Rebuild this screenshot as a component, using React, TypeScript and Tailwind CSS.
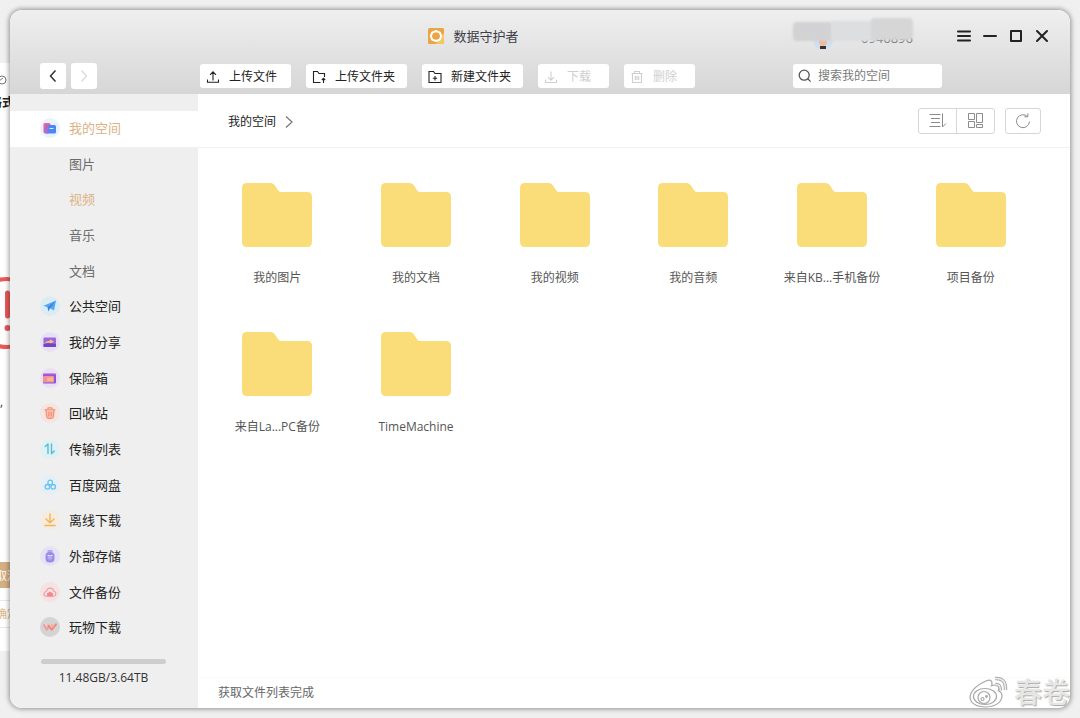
import type { ReactNode } from "react";

interface NavItem {
  label: string;
  icon?: ReactNode;
  halo?: string;
  active?: boolean;
  tone?: string;
}

interface ToolItem {
  label: string;
  icon: ReactNode;
  width: string;
  disabled?: boolean;
}

const navItems: NavItem[] = [
  {
    label: "我的空间",
    active: true,
    tone: "text-[#dcb384]",
    halo: "bg-[#e9f2fd]",
    icon: (
      <>
        <rect x="3.500" y="5" width="7" height="10" rx="1.500" fill="#f0648c" />
        <path d="M6 15V8q0-1 1-1h7.500q1.500 0 1.500 1.500V14q0 1.500-1.500 1.500H7q-1 0-1-.5Z" fill="#4c86f5" />
        <path d="M4.500 15.500V10q2-3 4-3v8.500Z" fill="#a070d8" />
        <path d="M9.500 10.500h4" stroke="#cfe2ff" strokeWidth="1.200" />
      </>
    ),
  },
  { label: "图片", tone: "text-[#6b6b6b]" },
  { label: "视频", tone: "text-[#dcb384]" },
  { label: "音乐", tone: "text-[#6b6b6b]" },
  { label: "文档", tone: "text-[#6b6b6b]" },
  {
    label: "公共空间",
    halo: "bg-[#dcecf4]",
    icon: (
      <>
        <path d="M3.500 9.800 16 4.500l-2 10-4-2.300Z" fill="#57a6f2" />
        <path d="M7.500 11.500 16 4.500l-6 7.700-1.500 3.300Z" fill="#3b7fdc" />
      </>
    ),
  },
  {
    label: "我的分享",
    halo: "bg-[#e9e0f5]",
    icon: (
      <>
        <rect x="3.500" y="5.500" width="12.500" height="9.500" rx="1" fill="#9a68dc" />
        <path d="M3.500 12q3-3.500 6.500-3.200V7.200l4 2.500-4 2.300v-1.200q-3.500-.4-6.500 1.200Z" fill="#f5c27a" />
        <path d="M3.500 12.300q6-2 12.500 0V14q0 1-1 1H4.500q-1 0-1-1Z" fill="#7044cc" />
      </>
    ),
  },
  {
    label: "保险箱",
    halo: "bg-[#eadff5]",
    icon: (
      <>
        <rect x="3" y="5.500" width="13" height="10" rx="1.200" fill="#8a56dc" />
        <rect x="3" y="8" width="11" height="6.500" rx=".8" fill="#f58f9a" />
        <rect x="7" y="9.500" width="6" height="3.500" fill="#f9b98c" />
        <path d="M3.500 6.800h12" stroke="#c05bc9" />
      </>
    ),
  },
  {
    label: "回收站",
    halo: "bg-[#f5e4e0]",
    icon: (
      <g stroke="#f58f76" fill="none" strokeWidth="1.200" strokeLinecap="round" strokeLinejoin="round">
        <path d="M5 6.800h10M8 6.500V4.800h4v1.700" />
        <path d="M6 7l.6 6.500q.2 1.800 1.900 1.800h3q1.700 0 1.900-1.800L14 7" fill="#f9c0b0" />
        <path d="M8.800 9v3.800M11.200 9v3.800" />
      </g>
    ),
  },
  {
    label: "传输列表",
    halo: "bg-[#e0f0f3]",
    icon: (
      <g stroke="#58bcd8" fill="none" strokeWidth="1.400" strokeLinecap="round" strokeLinejoin="round">
        <path d="M5.200 7.500 8 5v9.500M11.500 5v9.800L14.200 12" />
      </g>
    ),
  },
  {
    label: "百度网盘",
    halo: "bg-[#e4f0f6]",
    icon: (
      <g stroke="#67c4ee" fill="none" strokeWidth="1.300">
        <circle cx="10.200" cy="7.500" r="2.300" />
        <circle cx="7.400" cy="11.800" r="2.300" />
        <circle cx="13.200" cy="11.800" r="2.300" />
      </g>
    ),
  },
  {
    label: "离线下载",
    halo: "bg-[#f5ece0]",
    icon: (
      <g stroke="#f5b455" fill="none" strokeWidth="1.500" strokeLinecap="round" strokeLinejoin="round">
        <path d="M10 4v8.500M6 9l4 3.800L14 9M5 15.500h10" />
      </g>
    ),
  },
  {
    label: "外部存储",
    halo: "bg-[#e6e2f6]",
    icon: (
      <>
        <path d="M7.500 4h5v2.500h-5z" fill="#b5a7ef" />
        <rect x="5.500" y="6" width="9" height="10.500" rx="4" fill="#9c8be8" />
        <circle cx="10" cy="11.500" r="2.300" fill="#b8abf4" />
        <path d="M7.500 9.500h2M10.500 9.500h2" stroke="#efebff" />
      </>
    ),
  },
  {
    label: "文件备份",
    halo: "bg-[#f6e2e2]",
    icon: (
      <>
        <path
          d="M6 14.200q-2.300-.5-2-2.700.3-1.800 2.300-2 .8-3.500 4-3.400 3 .1 3.500 3.200 2.200.4 2.100 2.600-.2 1.800-1.900 2.300Z"
          fill="none"
          stroke="#f0a0a2"
          strokeWidth="1.100"
        />
        <path d="M7 14.500v-3l3-2 3 2v3Z" fill="#ef8b90" />
      </>
    ),
  },
  {
    label: "玩物下载",
    halo: "bg-[#d4d4d4]",
    icon: (
      <g fill="none" strokeLinecap="round" strokeLinejoin="round" strokeWidth="2">
        <path d="m4 8 2.800 4.800L9 9" stroke="#f79a9a" />
        <path d="m8.500 8.500 3 4.300L16 7.300" stroke="#f38482" />
        <path d="m11.800 8 1 1.500" stroke="#f9b07c" />
      </g>
    ),
  },
];

const toolItems: ToolItem[] = [
  {
    label: "上传文件",
    width: "w-[91px]",
    icon: <path d="M7 10.500V2M4 4.800 7 1.800l3 3M1.500 9.500v2.800h11V9.500" />,
  },
  {
    label: "上传文件夹",
    width: "w-[101px]",
    icon: <path d="M8.500 12.500h-7v-11h4l1.500 2h5.500V7M11.500 13V8.300M9.800 10l1.700-1.700 1.700 1.700" />,
  },
  {
    label: "新建文件夹",
    width: "w-[101px]",
    icon: <path d="M1 12.500v-11h4.500l1.500 2h6v9ZM7 6v4.500M4.800 8.200h4.400" />,
  },
  {
    label: "下载",
    width: "w-[71px]",
    disabled: true,
    icon: <path d="M7 1.500V10M4 7.200l3 3 3-3M1.500 9.800v2.700h11V9.800" />,
  },
  {
    label: "删除",
    width: "w-[71px]",
    disabled: true,
    icon: <path d="M1.500 3.500h11M4.500 3.500v-2h5v2M2.500 3.500v9h9v-9M5.300 6v4M7 6v4M8.700 6v4" />,
  },
];

const windowControls = [
  { name: "菜单", d: "M1 2.500h12M1 7h12M1 11.500h12" },
  { name: "最小化", d: "M1 7h12" },
  { name: "最大化", d: "M2 2h10v10H2z" },
  { name: "关闭", d: "m2 2 10 10M12 2 2 12" },
];

const folders = [
  "我的图片",
  "我的文档",
  "我的视频",
  "我的音频",
  "来自KB...手机备份",
  "项目备份",
  "来自La...PC备份",
  "TimeMachine",
];

function Backdrop() {
  return (
    <div className="absolute left-0 top-[63px] flex h-[588px] w-[200px] flex-col overflow-hidden bg-white" aria-hidden="true">
      <svg className="mt-[12px] h-[10px] w-[8px]" viewBox="0 0 8 10" fill="none" stroke="#777">
        <circle cx="2" cy="5" r="4" />
        <path d="M-1 6l4-3" />
      </svg>
      <p className="-ml-[10px] mt-[9px] text-[12px] font-bold leading-[18px] text-[#222]">格式</p>
      <svg className="mt-[163px] h-[76px] w-[44px] shrink-0" viewBox="0 0 44 76" fill="none" stroke="#ea5a5a" strokeWidth="4">
        <circle cx="7" cy="38" r="34" />
        <path d="M7.500 18v23" strokeLinecap="round" strokeWidth="5" />
        <circle cx="7.500" cy="53" r="3" fill="#ea5a5a" stroke="none" />
      </svg>
      <p className="mt-[42px] text-[12px] leading-[18px] text-[#333]">,</p>
      <div className="mt-[151px] h-[26px] shrink-0 bg-[#d3af84] text-[11px] leading-[28px] text-white">
        <span className="-ml-[4px]">取消</span>
      </div>
      <div className="mt-[12px] h-[28px] shrink-0 border-y border-[#e8e8e8] text-[11px] leading-[26px] text-[#dcb384]">
        <span className="-ml-[4px]">确定</span>
      </div>
    </div>
  );
}

function Account() {
  return (
    <div className="relative h-[40px] w-[120px]">
      <svg className="absolute left-[18px] top-[14px] h-[22px] w-[24px]" viewBox="0 0 24 22">
        <circle cx="12" cy="10" r="10" fill="#cfdff0" />
        <circle cx="12" cy="12" r="4" fill="#f3b8a0" />
        <path d="M9 16h6v3H9z" fill="#333" />
      </svg>
      <span className="absolute right-0 top-[13px] text-[13px] leading-[18px] text-[#7c7c7c]">0946896</span>
      <span className="absolute left-0 top-[6px] h-[19px] w-[40px] rounded-sm bg-[#d2d2d4] blur-[1px]" />
      <span className="absolute left-[38px] top-[5px] h-[20px] w-[46px] bg-[#dcdee0] blur-[1px]" />
      <span className="absolute right-0 top-[2px] h-[22px] w-[42px] rounded-sm bg-[#d6d6d6] blur-[1px]" />
    </div>
  );
}

function Header() {
  return (
    <header className="grid h-[84px] shrink-0 grid-cols-[188px_1fr_277px] grid-rows-[52px_28px] items-center bg-linear-to-b from-[#efefef] to-[#d6d6d6]">
      <div className="col-start-2 flex items-center justify-center gap-[9px] pr-[44px]">
        <svg className="h-[16px] w-[16px]" viewBox="0 0 16 16">
          <rect width="16" height="16" rx="1.500" fill="#eba544" />
          <path d="M8 16h6.500q1.500 0 1.500-1.500V5Z" fill="#f4c765" />
          <path d="m8 3 3.800 1.600L13.200 8l-1.400 3.600L8 13l-3.800-1.400L2.800 8l1.400-3.400Z" fill="none" stroke="#fff" strokeWidth="2" strokeLinejoin="round" />
        </svg>
        <h1 className="text-[13px] leading-[18px] text-[#3d3d48]">数据守护者</h1>
      </div>
      <div className="flex items-center justify-between pr-[15px]">
        <Account />
        <div className="flex text-[#222]">
          {windowControls.map((c) => (
            <button key={c.name} aria-label={c.name} className="flex h-[26px] w-[26px] items-center justify-center">
              <svg className="h-[14px] w-[14px]" viewBox="0 0 14 14" fill="none" stroke="currentColor" strokeWidth="2" strokeLinecap="round" strokeLinejoin="round">
                <path d={c.d} />
              </svg>
            </button>
          ))}
        </div>
      </div>

      <div className="flex gap-[5px] pl-[30px]">
        <button aria-label="后退" className="flex h-[26px] w-[26px] items-center justify-center rounded-[3px] bg-white text-[#333]">
          <svg className="h-[12px] w-[12px]" viewBox="0 0 12 12" fill="none" stroke="currentColor" strokeWidth="1.500">
            <path d="M8.500.5 3.500 6l5 5.500" />
          </svg>
        </button>
        <button aria-label="前进" disabled className="flex h-[26px] w-[26px] items-center justify-center rounded-[3px] bg-white text-[#d8d8d8]">
          <svg className="h-[12px] w-[12px]" viewBox="0 0 12 12" fill="none" stroke="currentColor" strokeWidth="1.200">
            <path d="m3.500.5 5 5.500-5 5.500" />
          </svg>
        </button>
      </div>
      <div className="flex gap-[15px] pl-[2px]">
        {toolItems.map((t) => (
          <button
            key={t.label}
            disabled={t.disabled}
            className={`flex h-[24px] items-center gap-[9px] rounded-[3px] bg-white pl-[6px] pt-[2px] text-[12px] leading-[18px] whitespace-nowrap ${t.width} ${
              t.disabled ? "text-[#cfcfcf]" : "text-[#222]"
            }`}
          >
            <svg className="h-[14px] w-[14px] shrink-0" viewBox="0 0 14 14" fill="none" stroke="currentColor" strokeWidth="1.100">
              {t.icon}
            </svg>
            {t.label}
          </button>
        ))}
      </div>
      <label className="flex h-[24px] w-[149px] items-center gap-[6px] rounded-[3px] bg-white pl-[5px]">
        <svg className="h-[14px] w-[14px] shrink-0" viewBox="0 0 14 14" fill="none" stroke="#555" strokeWidth="1.300">
          <circle cx="6.200" cy="6.200" r="5" />
          <path d="m9.800 9.800 2.800 2.800" />
        </svg>
        <input
          type="search"
          aria-label="搜索"
          placeholder="搜索我的空间"
          className="w-full min-w-0 bg-transparent text-[12px] leading-[18px] outline-none placeholder:text-[#7a7a7a]"
        />
      </label>
    </header>
  );
}

function Sidebar() {
  return (
    <aside className="flex w-[188px] shrink-0 flex-col bg-[#efefef] pt-[17px]">
      <nav className="flex flex-1 flex-col">
        {navItems.map((item) => (
          <a
            key={item.label}
            href="#"
            className={`flex flex-1 items-center gap-[9px] pb-[2px] pl-[30px] text-[13px] leading-[18px] ${item.tone ?? "text-[#222]"} ${
              item.active ? "bg-white" : ""
            }`}
          >
            <span className={`h-[20px] w-[20px] rounded-full ${item.halo ?? ""}`}>
              {item.icon && (
                <svg className="h-[20px] w-[20px]" viewBox="0 0 20 20">
                  {item.icon}
                </svg>
              )}
            </span>
            {item.label}
          </a>
        ))}
      </nav>
      <div className="h-[62px] pl-[31px] pt-[13px]">
        <div className="h-[5px] w-[125px] rounded-full bg-[#cdcdcd]" />
        <p className="mt-[5px] w-[125px] text-center text-[12px] leading-[18px] text-[#333]">11.48GB/3.64TB</p>
      </div>
    </aside>
  );
}

function ViewBar() {
  return (
    <div className="flex h-[54px] items-center justify-between border-b border-[#f2f2f2] pl-[30px] pr-[29px]">
      <div className="flex items-center gap-[9px] pt-[2px] text-[12px] leading-[18px] text-[#222]">
        我的空间
        <svg className="h-[12px] w-[8px]" viewBox="0 0 8 12" fill="none" stroke="#777" strokeWidth="1.200">
          <path d="m1 .5 6 5.500-6 5.500" />
        </svg>
      </div>
      <div className="flex gap-[10px] text-[#8c8c8c]">
        <div className="flex h-[26px] w-[77px] divide-x divide-[#d6d6d6] rounded-[3px] border border-[#d6d6d6]">
          <button aria-label="列表" className="flex flex-1 items-center justify-center">
            <svg className="h-[16px] w-[18px]" viewBox="0 0 18 16" fill="none" stroke="currentColor">
              <path d="M.5 1.500h11M2 5.500h9M2 9.500h9M.5 13.500h11M13.500.5v13.500l3.500-3.500" />
            </svg>
          </button>
          <button aria-label="网格" className="flex flex-1 items-center justify-center">
            <svg className="h-[16px] w-[16px]" viewBox="0 0 16 16" fill="none" stroke="currentColor">
              <path d="M.5.500h6v6h-6zM.5 8.500h6v6h-6zM8.500.500h6v9h-6zM8.500 11.500h6v3h-6z" />
            </svg>
          </button>
        </div>
        <button aria-label="刷新" className="flex h-[26px] w-[36px] items-center justify-center rounded-[3px] border border-[#d6d6d6]">
          <svg className="h-[16px] w-[16px]" viewBox="0 0 16 16" fill="none" stroke="currentColor">
            <path d="M12.500 3.500A6.500 6.500 0 1 0 14.500 8.500M12.800.5v3.300H9.300" />
          </svg>
        </button>
      </div>
    </div>
  );
}

function Watermark() {
  return (
    <div className="absolute bottom-[9px] right-[10px] flex items-center gap-[5px]" aria-hidden="true">
      <svg className="h-[34px] w-[40px]" viewBox="0 0 40 34" fill="none" stroke="#a8a8a8" strokeWidth="1.200">
        <path
          d="M17 6q6-2.500 6 2.500 0 1.200-.6 2.200 8-2.200 7.600 2.800 0 1.200-.7 2.300 4 1.700 3.700 5.700Q31.500 31 17 32 2 31.500 1 22.500 1.500 13 17 6Z"
          fill="#fff"
        />
        <ellipse cx="16" cy="21.500" rx="11.500" ry="8" />
        <circle cx="15" cy="22.500" r="6" />
        <circle cx="13.500" cy="24" r="1.500" />
        <circle cx="17.500" cy="21.500" r=".8" fill="#a8a8a8" />
        <path d="M26.500 9.500q5-.5 5 6" strokeWidth="3.500" />
        <path d="M26 3.500q11-1 10.500 11.500" strokeWidth="3.500" />
        <path d="M26.500 9.500q5-.5 5 6M26 3.500q11-1 10.500 11.500" stroke="#eee" strokeWidth="1.500" />
      </svg>
      <span className="text-[28px] font-medium leading-[34px] text-[#e6e6e6] [text-shadow:1px_1px_1px_#aaa,-1px_-1px_1px_#fff]">春卷</span>
    </div>
  );
}

export default function App() {
  return (
    <div className="relative flex min-h-screen overflow-hidden bg-[#f0f0f0] p-[10px] font-['Open_Sans','Noto_Sans_CJK_SC',sans-serif]">
      <Backdrop />
      <div className="relative flex flex-1 flex-col overflow-hidden rounded-[12px] bg-white shadow-[0_0_5px_1px_rgba(0,0,0,0.4)]">
        <Header />
        <div className="flex flex-1">
          <Sidebar />
          <main className="flex min-w-0 flex-1 flex-col">
            <ViewBar />
            <ul className="grid flex-1 auto-rows-[149px] grid-cols-6 pl-[10px] pr-[30px] pt-[35px]">
              {folders.map((name) => (
                <li key={name} className="flex flex-col items-center">
                  <svg className="h-[64px] w-[70px]" viewBox="0 0 70 64" fill="#fadd79">
                    <path d="M5 0h24q2.500 0 4 2.500l2.500 4Q37 9 39 9h26q5 0 5 5v45q0 5-5 5H5q-5 0-5-5V5q0-5 5-5Z" />
                  </svg>
                  <span className="mt-[22px] text-[12px] leading-[18px] text-[#555]">{name}</span>
                </li>
              ))}
            </ul>
            <footer className="h-[31px] border-t border-[#fafafa] pl-[20px] text-[12px] leading-[30px] text-[#666]">获取文件列表完成</footer>
          </main>
        </div>
      </div>
      <Watermark />
    </div>
  );
}
